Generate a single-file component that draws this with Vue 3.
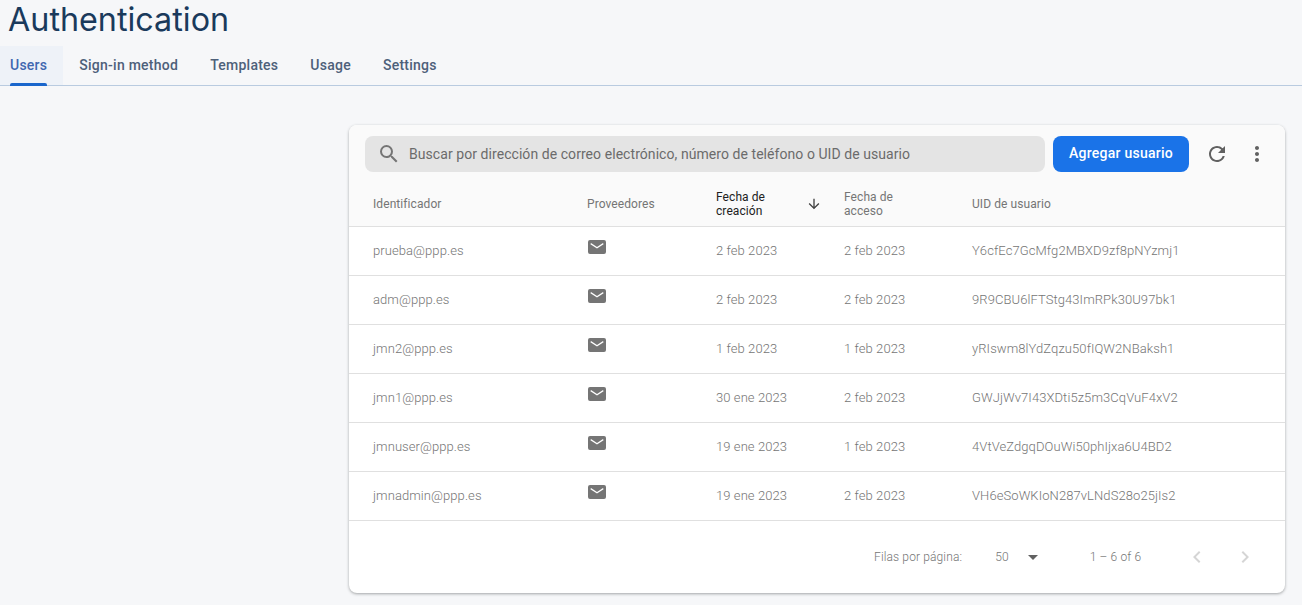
<template>
  <div class="page">
    <header class="page-header">
      <h1 class="page-title">Authentication</h1>
      <nav class="tabs">
        <a
          v-for="tab in tabs"
          :key="tab"
          class="tab"
          :class="{ 'tab--active': tab === 'Users' }"
        >
          <span class="tab__label">{{ tab }}</span>
        </a>
      </nav>
    </header>

    <main class="content">
      <section class="card">
        <div class="toolbar">
          <div class="search">
            <svg class="search__icon" viewBox="0 0 24 24" aria-hidden="true">
              <path d="M15.5 14h-.79l-.28-.27A6.47 6.47 0 0 0 16 9.5 6.5 6.5 0 1 0 9.5 16c1.61 0 3.09-.59 4.23-1.57l.27.28v.79l5 4.99L20.49 19l-4.99-5zm-6 0C7.01 14 5 11.99 5 9.5S7.01 5 9.5 5 14 7.01 14 9.5 11.99 14 9.5 14z" />
            </svg>
            <span class="search__text">Buscar por dirección de correo electrónico, número de teléfono o UID de usuario</span>
          </div>
          <button type="button" class="add-btn">Agregar usuario</button>
          <span class="tool tool--refresh">
            <svg viewBox="0 0 24 24" aria-hidden="true">
              <path d="M17.65 6.35A7.958 7.958 0 0 0 12 4c-4.42 0-7.99 3.58-7.99 8s3.57 8 7.99 8c3.73 0 6.84-2.55 7.73-6h-2.08A5.99 5.99 0 0 1 12 18c-3.31 0-6-2.69-6-6s2.69-6 6-6c1.66 0 3.14.69 4.22 1.78L13 11h7V4l-2.35 2.35z" />
            </svg>
          </span>
          <span class="tool tool--more">
            <svg viewBox="0 0 24 24" aria-hidden="true">
              <path d="M12 8c1.1 0 2-.9 2-2s-.9-2-2-2-2 .9-2 2 .9 2 2 2zm0 2c-1.1 0-2 .9-2 2s.9 2 2 2 2-.9 2-2-.9-2-2-2zm0 6c-1.1 0-2 .9-2 2s.9 2 2 2 2-.9 2-2-.9-2-2-2z" />
            </svg>
          </span>
        </div>

        <div class="row row--head">
          <div>Identificador</div>
          <div>Proveedores</div>
          <div class="sorted">
            <span class="sorted__label">Fecha de<br />creación</span>
            <svg class="sorted__arrow" viewBox="0 0 24 24" aria-hidden="true">
              <path d="M20 12l-1.41-1.41L13 16.17V4h-2v12.17l-5.58-5.59L4 12l8 8 8-8z" />
            </svg>
          </div>
          <div class="two-line">Fecha de<br />acceso</div>
          <div>UID de usuario</div>
        </div>

        <div v-for="user in users" :key="user.uid" class="row">
          <div>{{ user.email }}</div>
          <div class="provider">
            <svg viewBox="0 0 18 14" aria-hidden="true">
              <path d="M2 0h14a2 2 0 0 1 2 2v10a2 2 0 0 1-2 2H2a2 2 0 0 1-2-2V2a2 2 0 0 1 2-2zm1 3L2.4 4.2 9 8.4l6.6-4.2L15 3 9 6.9z" fill-rule="evenodd" />
            </svg>
          </div>
          <div>{{ user.created }}</div>
          <div>{{ user.access }}</div>
          <div>{{ user.uid }}</div>
        </div>

        <footer class="pager">
          <span class="pager__label">Filas por página:</span>
          <span class="pager__size">50</span>
          <span class="pager__caret" />
          <span class="pager__range">1 – 6 of 6</span>
          <svg class="pager__nav" viewBox="0 0 24 24" aria-hidden="true">
            <path d="M15.41 7.41L14 6l-6 6 6 6 1.41-1.41L10.83 12z" />
          </svg>
          <svg class="pager__nav pager__nav--next" viewBox="0 0 24 24" aria-hidden="true">
            <path d="M10 6L8.59 7.41 13.17 12l-4.58 4.59L10 18l6-6z" />
          </svg>
        </footer>
      </section>
    </main>
  </div>
</template>

<script setup>
const tabs = ['Users', 'Sign-in method', 'Templates', 'Usage', 'Settings']

const users = [
  { email: 'prueba@ppp.es', created: '2 feb 2023', access: '2 feb 2023', uid: 'Y6cfEc7GcMfg2MBXD9zf8pNYzmj1' },
  { email: 'adm@ppp.es', created: '2 feb 2023', access: '2 feb 2023', uid: '9R9CBU6lFTStg43ImRPk30U97bk1' },
  { email: 'jmn2@ppp.es', created: '1 feb 2023', access: '1 feb 2023', uid: 'yRIswm8lYdZqzu50fIQW2NBaksh1' },
  { email: 'jmn1@ppp.es', created: '30 ene 2023', access: '2 feb 2023', uid: 'GWJjWv7I43XDti5z5m3CqVuF4xV2' },
  { email: 'jmnuser@ppp.es', created: '19 ene 2023', access: '1 feb 2023', uid: '4VtVeZdgqDOuWi50phIjxa6U4BD2' },
  { email: 'jmnadmin@ppp.es', created: '19 ene 2023', access: '2 feb 2023', uid: 'VH6eSoWKIoN287vLNdS28o25jIs2' },
]
</script>

<style>
html,
body {
  margin: 0;
  background: #f6f7f9;
}
</style>

<style scoped>
.page {
  height: 605px;
  overflow: hidden;
  background: #f6f7f9;
  font-family: Roboto, "Liberation Sans", sans-serif;
}

.page-header {
  border-bottom: 1px solid #b9cbe0;
}

.page-title {
  margin: 0;
  height: 46px;
  padding-left: 8px;
  box-sizing: border-box;
  color: #1a3a5c;
  font-family: Inter, Roboto, sans-serif;
  font-size: 32.3px;
  font-weight: 400;
  line-height: 39px;
}

.tabs {
  display: flex;
  height: 39px;
}

.tab {
  display: flex;
  align-items: center;
  padding: 0 16px 2px;
  color: #4d607a;
  font-size: 14px;
  font-weight: 500;
  letter-spacing: 0.25px;
}

.tab:first-child {
  padding: 0 16px 2px 10px;
}

.tab__label {
  position: relative;
  display: flex;
  align-items: center;
  height: 100%;
}

.tab--active {
  background: #eef2f8;
  color: #3f67b0;
}

.tab--active .tab__label::after {
  content: "";
  position: absolute;
  left: 0;
  right: 0;
  bottom: -3px;
  height: 3px;
  border-radius: 2px 2px 0 0;
  background: #1a66cc;
}

.content {
  padding: 39px 17px 0 349px;
}

.card {
  height: 468px;
  overflow: hidden;
  border-radius: 8px;
  background: #fff;
  box-shadow: 0 1px 3px rgba(60, 64, 67, 0.45);
}

.toolbar {
  display: flex;
  align-items: center;
  box-sizing: border-box;
  height: 47px;
  padding: 11px 0 0 16px;
  background: #fafafa;
}

.search {
  display: flex;
  align-items: center;
  width: 680px;
  height: 36px;
  border-radius: 8px;
  background: #e4e4e4;
  color: #6b6b6b;
  font-size: 14px;
  letter-spacing: 0.06px;
}

.search__icon {
  width: 24px;
  height: 24px;
  margin: 0 8px 0 12px;
  fill: #757575;
}

.search__text {
  white-space: nowrap;
}

.add-btn {
  width: 136px;
  height: 36px;
  margin-left: 8px;
  padding: 0 0 2px;
  border: 0;
  border-radius: 8px;
  background: #1a73e8;
  color: #fff;
  font-family: inherit;
  font-size: 14px;
  font-weight: 500;
  letter-spacing: 0.25px;
}

.tool {
  display: flex;
  width: 24px;
  height: 24px;
  fill: #616161;
}

.tool--refresh {
  margin-left: 16px;
}

.tool--more {
  margin-left: 16px;
}

.row {
  display: grid;
  grid-template-columns: 214px 129px 128px 128px 1fr;
  align-items: center;
  box-sizing: border-box;
  height: 49px;
  padding: 0 0 2px 24px;
  border-bottom: 1px solid #e0e0e0;
  color: #757575;
  font-size: 13px;
  font-weight: 300;
  letter-spacing: 0.08px;
}

.row--head {
  height: 55px;
  padding: 9px 0 0 24px;
  background: #fafafa;
  font-size: 12px;
  font-weight: 400;
  line-height: 14px;
  letter-spacing: 0.08px;
}

.sorted {
  display: flex;
  align-items: center;
  justify-content: space-between;
  width: 106px;
  color: #212121;
}

.sorted__arrow {
  width: 16px;
  height: 16px;
  fill: #424242;
}

.provider {
  display: flex;
  align-self: start;
  padding-top: 13px;
}

.provider svg {
  width: 18px;
  height: 14px;
  margin-left: 1px;
  fill: #757575;
}

.pager {
  display: flex;
  align-items: center;
  height: 72px;
  padding-left: 525px;
  color: #757575;
  font-size: 12px;
  font-weight: 300;
  letter-spacing: 0.13px;
}

.pager__size {
  margin-left: 33px;
}

.pager__caret {
  width: 0;
  height: 0;
  margin-left: 19px;
  border-top: 5px solid #616161;
  border-left: 5.5px solid transparent;
  border-right: 5.5px solid transparent;
}

.pager__range {
  margin-left: 52px;
}

.pager__nav {
  width: 24px;
  height: 24px;
  margin-left: 44px;
  fill: #d5d5d5;
}

.pager__nav--next {
  margin-left: 24px;
}
</style>
